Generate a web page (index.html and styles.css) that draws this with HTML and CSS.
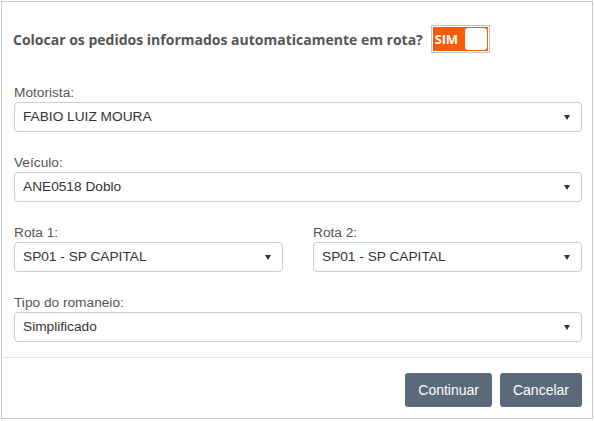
FILE: index.html
```html
<!DOCTYPE html>
<html lang="pt">
<head>
<meta charset="utf-8">
<link rel="stylesheet" href="styles.css">
</head>
<body>
<div class="dialog">
  <div class="form">
    <div class="question">
      <span class="question-text">Colocar os pedidos informados automaticamente em rota?</span>
      <span class="toggle"><span class="toggle-inner"><span class="toggle-label">SIM</span><span class="toggle-knob"></span></span></span>
    </div>
    <div class="field">
      <label class="label">Motorista:</label>
      <div class="select">FABIO LUIZ MOURA</div>
    </div>
    <div class="field">
      <label class="label">Veículo:</label>
      <div class="select">ANE0518 Doblo</div>
    </div>
    <div class="row">
      <div class="field">
        <label class="label">Rota 1:</label>
        <div class="select">SP01 - SP CAPITAL</div>
      </div>
      <div class="field">
        <label class="label">Rota 2:</label>
        <div class="select">SP01 - SP CAPITAL</div>
      </div>
    </div>
    <div class="field last">
      <label class="label">Tipo do romaneio:</label>
      <div class="select">Simplificado</div>
    </div>
  </div>
  <div class="footer">
    <button class="btn">Continuar</button>
    <button class="btn">Cancelar</button>
  </div>
</div>
</body>
</html>
```

FILE: styles.css
```css
html, body {
  margin: 0;
  padding: 0;
  background: #fff;
}
body {
  padding: 1px 0 0 1px;
  font-family: "Liberation Sans", Arial, sans-serif;
}
.dialog {
  box-sizing: border-box;
  width: 592px;
  height: 418px;
  border: 1px solid #c8c8c8;
  background: #fff;
}
.form {
  padding: 0 10px 15px 12px;
  border-bottom: 1px solid #e3e3e3;
}
.question {
  display: flex;
  align-items: center;
  height: 28px;
  padding-top: 23px;
  margin-bottom: 31px;
}
.question-text {
  font-family: "Open Sans", "Noto Sans", sans-serif;
  font-weight: bold;
  font-size: 14px;
  color: #555;
  margin-left: -1px;
}
.toggle {
  display: inline-flex;
  margin-left: 8px;
  border: 1px solid #c4c4c4;
  padding: 1px;
}
.toggle-inner {
  display: flex;
  align-items: center;
  width: 55px;
  height: 24px;
  background: #fa5a00;
  box-sizing: border-box;
  padding: 1px;
}
.toggle-label {
  font-family: "Open Sans", "Noto Sans", sans-serif;
  font-weight: bold;
  font-size: 13px;
  color: #fff;
  width: 30px;
  text-align: left;
  padding-left: 1px;
  letter-spacing: -0.3px;
}
.toggle-knob {
  width: 22px;
  height: 22px;
  box-sizing: border-box;
  background: #fff;
  border-radius: 3px;
  margin-left: auto;
}
.field {
  margin-bottom: 22px;
}
.field.last {
  margin-bottom: 0;
}
.row {
  display: grid;
  grid-template-columns: 1fr 1fr;
  column-gap: 30px;
}
.label {
  display: block;
  height: 18px;
  line-height: 18px;
  font-size: 13.7px;
  color: #555;
}
.select {
  position: relative;
  box-sizing: border-box;
  height: 30px;
  line-height: 28px;
  border: 1px solid #cccccc;
  border-radius: 4px;
  padding-left: 8px;
  font-size: 13.7px;
  color: #333;
  background: #fff;
}
.select::after {
  content: "";
  position: absolute;
  right: 11px;
  top: 12px;
  width: 0;
  height: 0;
  border-left: 3.5px solid transparent;
  border-right: 3.5px solid transparent;
  border-top: 5px solid #333;
}
.footer {
  display: flex;
  justify-content: flex-end;
  gap: 8px;
  padding: 15px 10px 0 0;
}
.btn {
  height: 34px;
  padding: 0 13px;
  border: none;
  border-radius: 3px;
  background: #5b6a7b;
  color: #fff;
  font-family: "Liberation Sans", Arial, sans-serif;
  font-size: 14px;
}
```
